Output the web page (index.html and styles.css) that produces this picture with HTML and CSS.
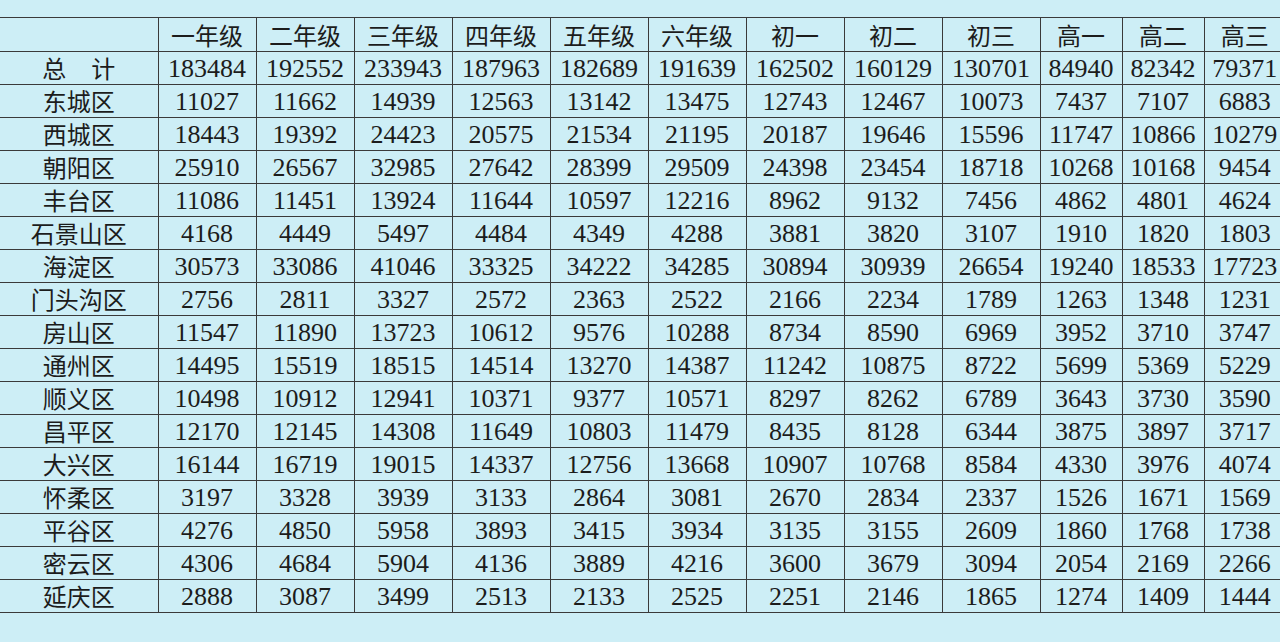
FILE: index.html
```html
<!DOCTYPE html>
<html lang="zh">
<head>
<meta charset="utf-8">
<title>北京市各区各年级学生数</title>
<link rel="stylesheet" href="styles.css">
</head>
<body>
<div class="page">
<table class="stats">
<colgroup>
<col class="c-name"><col class="c-w"><col class="c-w"><col class="c-w"><col class="c-w"><col class="c-w"><col class="c-w"><col class="c-w"><col class="c-w"><col class="c-w"><col class="c-n"><col class="c-n"><col class="c-last">
</colgroup>
<thead>
<tr class="head"><th></th><th>一年级</th><th>二年级</th><th>三年级</th><th>四年级</th><th>五年级</th><th>六年级</th><th>初一</th><th>初二</th><th>初三</th><th>高一</th><th>高二</th><th>高三</th></tr>
</thead>
<tbody>
<tr><th class="total">总<span class="sp"></span>计</th><td>183484</td><td>192552</td><td>233943</td><td>187963</td><td>182689</td><td>191639</td><td>162502</td><td>160129</td><td>130701</td><td>84940</td><td>82342</td><td>79371</td></tr>
<tr><th>东城区</th><td>11027</td><td>11662</td><td>14939</td><td>12563</td><td>13142</td><td>13475</td><td>12743</td><td>12467</td><td>10073</td><td>7437</td><td>7107</td><td>6883</td></tr>
<tr><th>西城区</th><td>18443</td><td>19392</td><td>24423</td><td>20575</td><td>21534</td><td>21195</td><td>20187</td><td>19646</td><td>15596</td><td>11747</td><td>10866</td><td>10279</td></tr>
<tr><th>朝阳区</th><td>25910</td><td>26567</td><td>32985</td><td>27642</td><td>28399</td><td>29509</td><td>24398</td><td>23454</td><td>18718</td><td>10268</td><td>10168</td><td>9454</td></tr>
<tr><th>丰台区</th><td>11086</td><td>11451</td><td>13924</td><td>11644</td><td>10597</td><td>12216</td><td>8962</td><td>9132</td><td>7456</td><td>4862</td><td>4801</td><td>4624</td></tr>
<tr><th>石景山区</th><td>4168</td><td>4449</td><td>5497</td><td>4484</td><td>4349</td><td>4288</td><td>3881</td><td>3820</td><td>3107</td><td>1910</td><td>1820</td><td>1803</td></tr>
<tr><th>海淀区</th><td>30573</td><td>33086</td><td>41046</td><td>33325</td><td>34222</td><td>34285</td><td>30894</td><td>30939</td><td>26654</td><td>19240</td><td>18533</td><td>17723</td></tr>
<tr><th>门头沟区</th><td>2756</td><td>2811</td><td>3327</td><td>2572</td><td>2363</td><td>2522</td><td>2166</td><td>2234</td><td>1789</td><td>1263</td><td>1348</td><td>1231</td></tr>
<tr><th>房山区</th><td>11547</td><td>11890</td><td>13723</td><td>10612</td><td>9576</td><td>10288</td><td>8734</td><td>8590</td><td>6969</td><td>3952</td><td>3710</td><td>3747</td></tr>
<tr><th>通州区</th><td>14495</td><td>15519</td><td>18515</td><td>14514</td><td>13270</td><td>14387</td><td>11242</td><td>10875</td><td>8722</td><td>5699</td><td>5369</td><td>5229</td></tr>
<tr><th>顺义区</th><td>10498</td><td>10912</td><td>12941</td><td>10371</td><td>9377</td><td>10571</td><td>8297</td><td>8262</td><td>6789</td><td>3643</td><td>3730</td><td>3590</td></tr>
<tr><th>昌平区</th><td>12170</td><td>12145</td><td>14308</td><td>11649</td><td>10803</td><td>11479</td><td>8435</td><td>8128</td><td>6344</td><td>3875</td><td>3897</td><td>3717</td></tr>
<tr><th>大兴区</th><td>16144</td><td>16719</td><td>19015</td><td>14337</td><td>12756</td><td>13668</td><td>10907</td><td>10768</td><td>8584</td><td>4330</td><td>3976</td><td>4074</td></tr>
<tr><th>怀柔区</th><td>3197</td><td>3328</td><td>3939</td><td>3133</td><td>2864</td><td>3081</td><td>2670</td><td>2834</td><td>2337</td><td>1526</td><td>1671</td><td>1569</td></tr>
<tr><th>平谷区</th><td>4276</td><td>4850</td><td>5958</td><td>3893</td><td>3415</td><td>3934</td><td>3135</td><td>3155</td><td>2609</td><td>1860</td><td>1768</td><td>1738</td></tr>
<tr><th>密云区</th><td>4306</td><td>4684</td><td>5904</td><td>4136</td><td>3889</td><td>4216</td><td>3600</td><td>3679</td><td>3094</td><td>2054</td><td>2169</td><td>2266</td></tr>
<tr><th>延庆区</th><td>2888</td><td>3087</td><td>3499</td><td>2513</td><td>2133</td><td>2525</td><td>2251</td><td>2146</td><td>1865</td><td>1274</td><td>1409</td><td>1444</td></tr>
</tbody>
</table>
</div>
</body>
</html>
```
FILE: styles.css
```css
html, body {
  margin: 0;
  padding: 0;
  background: #cdeef6;
}
.page {
  width: 1280px;
  height: 642px;
  overflow: hidden;
  padding-top: 17px;
  box-sizing: border-box;
}
.stats {
  border-collapse: collapse;
  table-layout: fixed;
  width: 1281px;
  color: #1c1c1c;
}
.c-name { width: 158px; }
.c-w { width: 98px; }
.c-n { width: 82px; }
.c-last { width: 81px; }
.stats th, .stats td {
  border: 1.5px solid #3a3a3a;
  padding: 0;
  text-align: center;
  white-space: nowrap;
  overflow: hidden;
}
.stats tr > :first-child { border-left: none; }
.stats tr > :last-child { border-right: none; }
.stats th {
  font-family: "Noto Sans CJK SC", "Noto Sans", sans-serif;
  font-weight: 400;
  font-size: 24px;
  line-height: 1;
}
.stats td {
  font-family: "Liberation Serif", "DejaVu Serif", serif;
  font-size: 26px;
  line-height: 1;
  padding-top: 2px;
}
.stats tr { height: 33px; }
.stats tr.head { height: 34px; }
.sp { display: inline-block; width: 25px; }
```
